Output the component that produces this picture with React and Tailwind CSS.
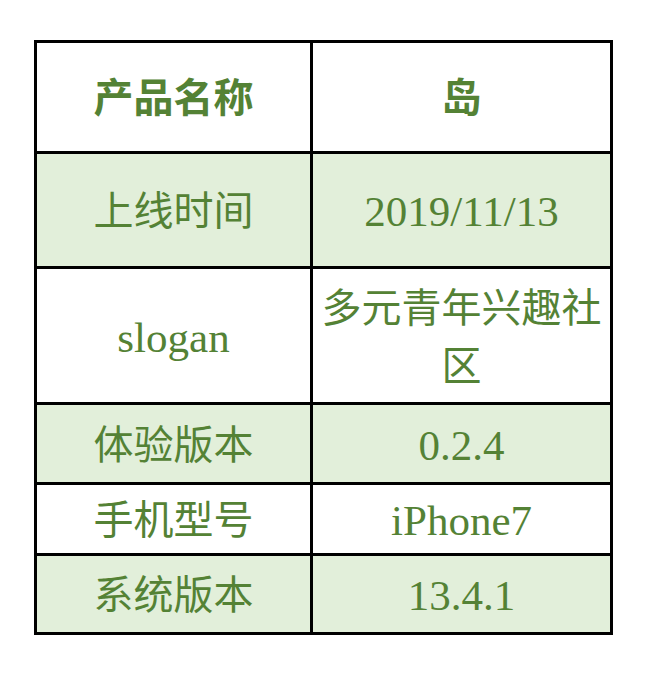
import React from "react";

const rows = [
  { label: "产品名称", value: "岛", head: true, h: "h-[108px]" },
  { label: "上线时间", value: "2019/11/13", shade: true, h: "h-[112px]" },
  { label: "slogan", value: "多元青年兴趣社区", h: "h-[133px]" },
  { label: "体验版本", value: "0.2.4", shade: true, h: "h-[77px]" },
  { label: "手机型号", value: "iPhone7", h: "h-[68px]" },
  { label: "系统版本", value: "13.4.1", shade: true, h: "h-[76px]" },
];

const isLatin = (t) => /^[\x00-\x7f]+$/.test(t);

export default function App() {
  return (
    <div
      className="w-[660px] h-[676px] bg-white pt-[40px] pl-[34px]"
      style={{ fontFamily: '"Liberation Serif", "Noto Sans CJK SC", serif' }}
    >
      <div className="inline-grid grid-cols-[273px_297px] gap-[3px] p-[3px] bg-black">
        {rows.map((r, i) => (
          <React.Fragment key={i}>
            {[r.label, r.value].map((t, j) => (
              <div
                key={j}
                className={`${r.h} ${
                  r.shade ? "bg-[#e2efda]" : "bg-white"
                } flex items-center justify-center text-center pt-[4px] leading-[58px] text-[#548235] ${
                  isLatin(t) ? "text-[43px]" : "text-[40px]"
                } ${r.head ? "font-bold" : "font-normal"}`}
              >
                {t}
              </div>
            ))}
          </React.Fragment>
        ))}
      </div>
    </div>
  );
}
